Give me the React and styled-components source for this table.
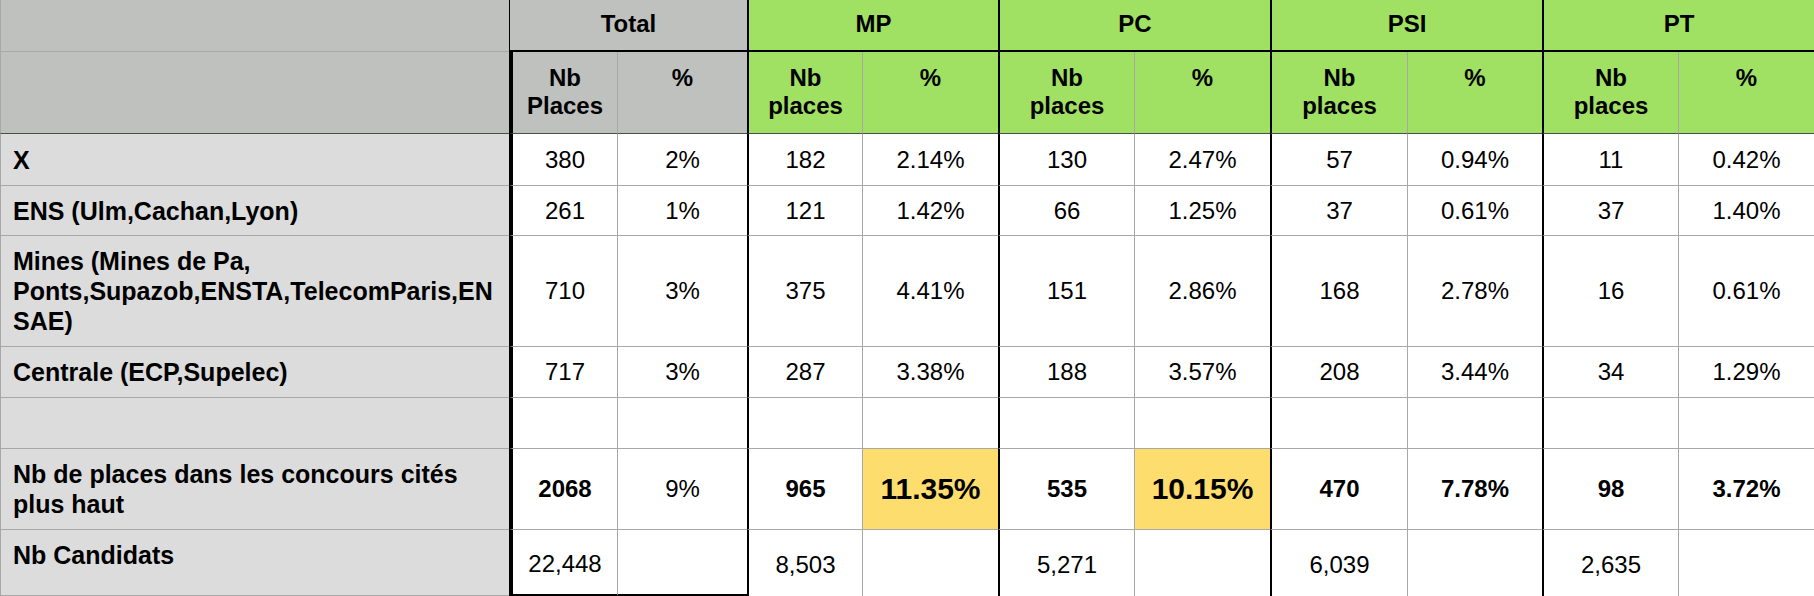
import React from "react";
import styled, { createGlobalStyle } from "styled-components";

const GlobalStyle = createGlobalStyle`
  * { box-sizing: border-box; }
  html, body { margin: 0; padding: 0; background: #ffffff; }
  body { font-family: "Liberation Sans", Arial, Helvetica, sans-serif; }
`;

const C = {
  headGray: "#bfc1bf",
  labelGray: "#dcdcdc",
  green: "#a0e063",
  yellow: "#fcdd6e",
  grid: "#a8a8a8",
  dark: "#4d4d4d",
  ink: "#000000",
};

const Sheet = styled.div`
  display: grid;
  width: 1814px;
  grid-template-columns: 509px 108px 130px 115px 136px 136px 136px 137px 135px 136px 136px;
  grid-template-rows: 52px 82px 52px 50px 111px 51px 51px 81px 66px;
  font-family: "Liberation Sans", Arial, Helvetica, sans-serif;
  font-size: 24px;
  color: ${C.ink};
  background: #ffffff;
`;

const Corner = styled.div`
  background: ${C.headGray};
  border-left: 1px solid ${C.grid};
  border-bottom: 1px solid ${(p) => (p.$dark ? C.dark : C.grid)};
`;

const GroupHead = styled.div`
  grid-column: span 2;
  display: flex;
  align-items: center;
  justify-content: center;
  background: ${(p) => p.$bg};
  border-left: ${(p) => (p.$first ? "1px" : "2px")} solid ${C.ink};
  border-bottom: 2px solid ${C.ink};
  font-weight: 700;
  padding-bottom: 2px;
`;

const SubHead = styled.div`
  background: ${(p) => p.$bg};
  border-left: ${(p) => p.$edge};
  border-bottom: 1px solid ${C.dark};
  padding-top: 12px;
  text-align: center;
  font-weight: 700;
  line-height: normal;
`;

const RowLabel = styled.div`
  display: flex;
  align-items: ${(p) => (p.$top ? "flex-start" : "center")};
  padding: ${(p) => (p.$top ? "10px 12px 0" : "0 12px")};
  background: ${C.labelGray};
  border-left: 1px solid ${C.grid};
  border-bottom: 1px solid ${C.grid};
  font-weight: 700;
  font-size: 25px;
  line-height: 30px;
`;

const Value = styled.div`
  display: flex;
  align-items: center;
  justify-content: center;
  background: ${(p) => (p.$hl ? C.yellow : "#ffffff")};
  border-left: ${(p) => p.$edge};
  border-bottom: ${(p) => p.$bottom};
  font-weight: ${(p) => (p.$bold ? 700 : 400)};
  font-size: ${(p) => (p.$hl ? "30px" : "24px")};
  padding-top: ${(p) => (p.$last ? "4px" : "0")};
`;

const groups = [
  { name: "Total", bg: C.headGray, nb: "Places" },
  { name: "MP", bg: C.green, nb: "places" },
  { name: "PC", bg: C.green, nb: "places" },
  { name: "PSI", bg: C.green, nb: "places" },
  { name: "PT", bg: C.green, nb: "places" },
];

const v = (t, opts = {}) => ({ t, ...opts });

const rows = [
  {
    label: ["X"],
    values: [
      [v("380"), v("2%")],
      [v("182"), v("2.14%")],
      [v("130"), v("2.47%")],
      [v("57"), v("0.94%")],
      [v("11"), v("0.42%")],
    ],
  },
  {
    label: ["ENS (Ulm,Cachan,Lyon)"],
    values: [
      [v("261"), v("1%")],
      [v("121"), v("1.42%")],
      [v("66"), v("1.25%")],
      [v("37"), v("0.61%")],
      [v("37"), v("1.40%")],
    ],
  },
  {
    label: ["Mines (Mines de Pa,", "Ponts,Supazob,ENSTA,TelecomParis,EN", "SAE)"],
    values: [
      [v("710"), v("3%")],
      [v("375"), v("4.41%")],
      [v("151"), v("2.86%")],
      [v("168"), v("2.78%")],
      [v("16"), v("0.61%")],
    ],
  },
  {
    label: ["Centrale (ECP,Supelec)"],
    values: [
      [v("717"), v("3%")],
      [v("287"), v("3.38%")],
      [v("188"), v("3.57%")],
      [v("208"), v("3.44%")],
      [v("34"), v("1.29%")],
    ],
  },
  {
    label: [],
    values: [
      [v(""), v("")],
      [v(""), v("")],
      [v(""), v("")],
      [v(""), v("")],
      [v(""), v("")],
    ],
  },
  {
    label: ["Nb de places dans les concours cités", "plus haut"],
    values: [
      [v("2068", { bold: true }), v("9%")],
      [v("965", { bold: true }), v("11.35%", { bold: true, hl: true })],
      [v("535", { bold: true }), v("10.15%", { bold: true, hl: true })],
      [v("470", { bold: true }), v("7.78%", { bold: true })],
      [v("98", { bold: true }), v("3.72%", { bold: true })],
    ],
  },
  {
    label: ["Nb Candidats"],
    top: true,
    last: true,
    values: [
      [v("22,448"), v("")],
      [v("8,503"), v("")],
      [v("5,271"), v("")],
      [v("6,039"), v("")],
      [v("2,635"), v("")],
    ],
  },
];

const groupEdge = (gi) =>
  gi === 0 ? `4px solid ${C.ink}` : `2px solid ${C.ink}`;
const innerEdge = `1px solid ${C.grid}`;

function Lines({ parts }) {
  return parts.map((p, i) => (
    <React.Fragment key={i}>
      {i > 0 && <br />}
      {p}
    </React.Fragment>
  ));
}

export default function App() {
  return (
    <>
      <GlobalStyle />
      <Sheet>
        <Corner />
        {groups.map((g, gi) => (
          <GroupHead key={g.name} $bg={g.bg} $first={gi === 0}>
            {g.name}
          </GroupHead>
        ))}

        <Corner $dark />
        {groups.map((g, gi) => (
          <React.Fragment key={g.name}>
            <SubHead $bg={g.bg} $edge={groupEdge(gi)}>
              Nb
              <br />
              {g.nb}
            </SubHead>
            <SubHead $bg={g.bg} $edge={innerEdge}>
              %
            </SubHead>
          </React.Fragment>
        ))}

        {rows.map((r, ri) => (
          <React.Fragment key={ri}>
            <RowLabel $top={r.top}>
              <span>
                <Lines parts={r.label} />
              </span>
            </RowLabel>
            {r.values.map((pair, gi) => {
              const bottom = r.last
                ? gi === 0
                  ? `2px solid ${C.ink}`
                  : "none"
                : `1px solid ${C.grid}`;
              return (
                <React.Fragment key={gi}>
                  <Value
                    $edge={groupEdge(gi)}
                    $bottom={bottom}
                    $bold={pair[0].bold}
                    $hl={pair[0].hl}
                    $last={r.last}
                  >
                    {pair[0].t}
                  </Value>
                  <Value
                    $edge={innerEdge}
                    $bottom={bottom}
                    $bold={pair[1].bold}
                    $hl={pair[1].hl}
                    $last={r.last}
                  >
                    {pair[1].t}
                  </Value>
                </React.Fragment>
              );
            })}
          </React.Fragment>
        ))}
      </Sheet>
    </>
  );
}
